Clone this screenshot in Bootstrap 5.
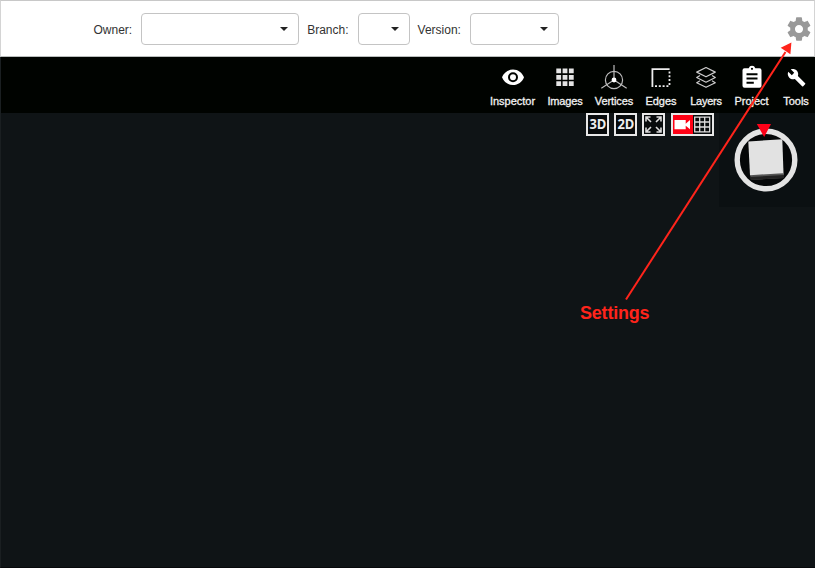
<!DOCTYPE html>
<html lang="en">
<head>
<meta charset="utf-8">
<meta name="viewport" content="width=device-width, initial-scale=1">
<title>Model viewer</title>
<link href="https://cdn.jsdelivr.net/npm/bootstrap@5.3.0/dist/css/bootstrap.min.css" rel="stylesheet">
<style>
body{font-family:"Liberation Sans",Arial,sans-serif;font-size:12px;line-height:16px;color:#333;background:#0f1416}
svg{display:block}
.app{height:568px;width:815px;border-left:1px solid #1a1f21;border-bottom:1px solid #07090b}
.top-bar{height:57px;margin-left:-1px;padding-left:92.5px;border:1px solid #d4d4d4;border-top-color:#c8c8c8;border-bottom-color:#b9bdbc}
.field-name{padding-top:2px}
.picker{height:32px;padding:0 10px 0 0;border:1px solid #c4c4c4;border-radius:4px;background:#fff}
.picker::after{content:"";border:4px solid transparent;border-top-color:#222;border-bottom:0}
.w-owner{width:158px;margin:0 8px 0 9px}
.w-branch{width:52px;margin:0 8px 0 9px}
.w-version{width:89px;margin-left:9px}
.settings{margin-right:1px}
.tool-bar{height:56px;background:#000300}
.tool{height:56px;padding-top:8px;color:#f2f2f2;font-size:11px;line-height:14px;-webkit-text-stroke:.3px #f2f2f2}
.tool svg{height:25px;width:26px;margin-bottom:4px}
.t-38{width:38px}.t-40{width:40px;letter-spacing:-.25px}.t-44{width:44px;letter-spacing:-.1px}.t-50{width:50px}.t-51{width:51px}.t-54{width:54px;letter-spacing:-.15px}
.view-modes{gap:5px;margin-right:5px}
.mode{width:23px;height:23px;border:2px solid #e8e8e8;background:#080b0c;color:#eee;font:bold 15px/18px "Open Sans","Noto Sans",sans-serif;padding:0}
.mode-text{transform:scaleX(.86);padding-bottom:3px}
.mode-wide{width:43px;margin-left:1px}
.cube-view{width:96px;height:94px;background:#0b1012}
.annotation{left:0;top:0;pointer-events:none}
.note{left:579px;top:303px;color:#ff241b;font-size:18px;line-height:20px;font-weight:bold;letter-spacing:-.2px}
</style>
<script src="https://cdn.jsdelivr.net/npm/bootstrap@5.3.0/dist/js/bootstrap.bundle.min.js"></script>
</head>
<body class="m-0 overflow-hidden">
<div class="app position-relative">
  <header class="top-bar d-flex align-items-center bg-white">
    <span class="field-name">Owner:</span><button class="picker w-owner d-flex align-items-center justify-content-end" aria-label="Owner"></button>
    <span class="field-name">Branch:</span><button class="picker w-branch d-flex align-items-center justify-content-end" aria-label="Branch"></button>
    <span class="field-name">Version:</span><button class="picker w-version d-flex align-items-center justify-content-end" aria-label="Version"></button>
    <a class="settings ms-auto" href="#" aria-label="Settings"><svg width="28" height="28" viewBox="0 0 24 24" fill="#999"><path d="M19.430 12.980c.04-.32.07-.64.07-.98s-.03-.66-.07-.98l2.110-1.650c.19-.15.24-.42.12-.64l-2-3.460c-.12-.22-.39-.3-.61-.22l-2.490 1c-.52-.4-1.080-.73-1.690-.98l-.38-2.650C14.460 2.180 14.250 2 14 2h-4c-.25 0-.46.18-.49.42l-.38 2.650c-.61.25-1.170.59-1.690.98l-2.490-1c-.23-.09-.49 0-.61.22l-2 3.460c-.13.22-.07.49.12.64l2.110 1.650c-.04.32-.07.65-.07.98s.03.66.07.98l-2.110 1.650c-.19.15-.24.42-.12.64l2 3.460c.12.22.39.3.61.22l2.490-1c.52.4 1.080.73 1.690.98l.38 2.650c.03.24.24.42.49.42h4c.25 0 .46-.18.49-.42l.38-2.650c.61-.25 1.170-.59 1.690-.98l2.490 1c.23.09.49 0 .61-.22l2-3.460c.12-.22.07-.49-.12-.64l-2.110-1.650zM12 15.500c-1.930 0-3.500-1.570-3.500-3.500s1.570-3.500 3.500-3.500 3.500 1.570 3.500 3.500-1.570 3.500-3.500 3.500z"/></svg></a>
  </header>
  <nav class="tool-bar d-flex justify-content-end">
    <div class="tool t-51 d-flex flex-column align-items-center"><svg viewBox="0 0 26 25" fill="#fff"><path fill-rule="evenodd" d="M13 4.500C8 4.500 3.700 7.700 2 12.300c1.700 4.600 6 7.800 11 7.800s9.300-3.200 11-7.800c-1.700-4.600-6-7.800-11-7.800zm0 12.800a5 5 0 1 1 0-10 5 5 0 0 1 0 10zm0-8a3 3 0 1 0 0 6 3 3 0 0 0 0-6z"/></svg>Inspector</div>
    <div class="tool t-54 d-flex flex-column align-items-center"><svg viewBox="0 0 26 25" fill="#e4e4e4"><path d="M4.300 3.500h4.800v4.800H4.300zM10.600 3.500h4.800v4.800h-4.800zM16.900 3.500h4.800v4.800h-4.800zM4.300 9.900h4.800v4.800H4.300zM10.600 9.900h4.800v4.800h-4.800zM16.900 9.900h4.800v4.800h-4.800zM4.300 16.200h4.800V21H4.300zM10.600 16.200h4.800V21h-4.800zM16.900 16.200h4.800V21h-4.800z"/></svg>Images</div>
    <div class="tool t-44 d-flex flex-column align-items-center"><svg viewBox="0 0 26 25" fill="none" stroke="#bbb" stroke-width="1.200"><circle cx="13" cy="15" r="8.600"/><path d="M13 0v15L.3 23.300M13 15l12.700 8.300"/><circle cx="13" cy="15" r="2.400" fill="#fff" stroke="none"/></svg>Vertices</div>
    <div class="tool t-50 d-flex flex-column align-items-center"><svg viewBox="0 0 26 25" fill="none" stroke="#eee" stroke-width="1.800"><path d="M4.400 22V4.200h17.200"/><path stroke-dasharray="2 1.800" d="M21.500 6.500v15.300M7 21.200h14.500"/></svg>Edges</div>
    <div class="tool t-40 d-flex flex-column align-items-center"><svg viewBox="0 0 26 25" fill="none" stroke="#ccc" stroke-width="1.200" stroke-linejoin="round"><path d="M13 2.500l9.300 4.600L13 11.800 3.700 7.100zM7 10.500l-3.300 2L13 17.200l9.300-4.700-3.300-2M7 15.800l-3.300 1.900L13 22.300l9.300-4.600-3.300-1.900"/></svg>Layers</div>
    <div class="tool t-51 d-flex flex-column align-items-center"><svg viewBox="0 0 26 25" fill="#fff"><path fill-rule="evenodd" d="M20.500 3.200h-4.200a3.500 3.500 0 0 0-6.600 0H5.500a2 2 0 0 0-2 2v15.600a2 2 0 0 0 2 2h15a2 2 0 0 0 2-2V5.200a2 2 0 0 0-2-2zM13 2.700a1.100 1.100 0 1 1 0 2.200 1.100 1.100 0 0 1 0-2.200zM7.500 8.200h11v2h-11zm0 4.300h11v2h-11zm0 4.300h7.300v2H7.500z"/></svg>Project</div>
    <div class="tool t-38 d-flex flex-column align-items-center"><svg viewBox="0 0 26 25"><path fill="#fff" transform="translate(4 3) scale(.8)" d="M22.700 19l-9.100-9.100c.9-2.300.4-5-1.500-6.900-2-2-5-2.400-7.400-1.300L9 6 6 9 1.600 4.700C.4 7.100.9 10.100 2.900 12.100c1.900 1.900 4.600 2.400 6.900 1.500l9.100 9.100c.4.400 1 .4 1.400 0l2.300-2.300c.5-.4.500-1.100.1-1.400z"/></svg>Tools</div>
  </nav>
  <main class="d-flex justify-content-end">
    <div class="view-modes d-flex">
      <button class="mode d-flex align-items-center justify-content-center"><span class="mode-text">3D</span></button>
      <button class="mode d-flex align-items-center justify-content-center"><span class="mode-text">2D</span></button>
      <button class="mode" aria-label="Fit to screen"><svg width="19" height="19" fill="none" stroke="#ddd" stroke-width="1.600"><path d="M2 6.500V2h4.500M12.500 2H17v4.500M2 12.500V17h4.500M17 12.500V17h-4.500M2 2l5 5M17 2l-5 5M2 17l5-5M17 17l-5-5"/></svg></button>
      <button class="mode mode-wide" aria-label="Camera and grid"><svg width="39" height="19"><path fill="#ff0014" d="M0 0h20v19H0z"/><path fill="#fff" d="M1.500 5h11.200v9.300H1.500zM12.700 8.700L17 5v9.300l-4.300-3.500z"/><path fill="none" stroke="#ddd" stroke-width="1.300" d="M21.700 2.200h15v14.600h-15zM26.700 2.200v14.600M31.700 2.200v14.600M21.700 7h15M21.700 12h15"/></svg></button>
    </div>
    <div class="cube-view"><svg width="96" height="94" viewBox="719 113 96 94"><circle cx="766" cy="160" r="28.800" fill="#050708" stroke="#e3e3e3" stroke-width="5.400"/><path fill="#555" d="M750 174l34-1v5l-33 2z"/><path fill="#222" d="M750 177l34-2v3l-33 2z"/><path fill="#e2e2e2" d="M748.300 141.500l34-2.300 1.200 34-33.500 2z"/><path fill="#ff0018" d="M756.800 124h14.200l-6.800 13z"/></svg></div>
  </main>
  <svg class="annotation position-absolute" width="814" height="568" viewBox="1 0 814 568"><path stroke="#ff241b" stroke-width="2" d="M626 299.500L785.500 52"/><path fill="#ff241b" d="M791.400 42.500L780.700 47.800l9.700 6.400z"/></svg>
  <div class="note position-absolute">Settings</div>
</div>
</body>
</html>
